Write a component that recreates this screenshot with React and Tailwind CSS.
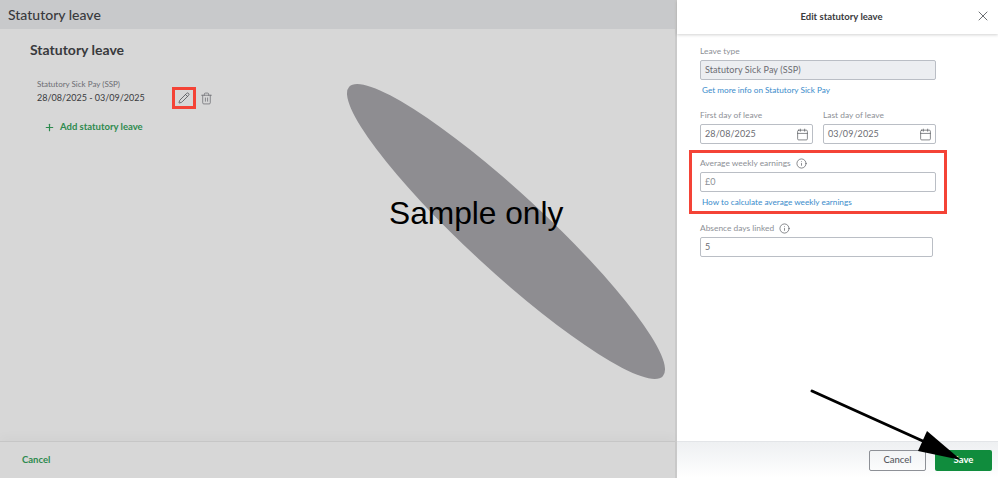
import React from 'react';
import { Calendar, Info, Pencil, Plus, Trash2, X } from 'lucide-react';

function Label({ children, info }) {
  return (
    <div className="flex items-center gap-[5px] h-[14px] text-[8.4px] leading-[14px] text-[#8d9096]">
      {children}
      {info && <Info size={11} strokeWidth={1.5} className="text-[#55585d]" />}
    </div>
  );
}

function Field({ value, className = '', icon }) {
  return (
    <div className={`flex items-center justify-between h-[20px] mt-[2px] pl-[4px] pr-[3px] border border-[#babec5] rounded-[2px] text-[9px] tracking-[0.1px] text-[#6b6c72] ${className}`}>
      <span>{value}</span>
      {icon && <Calendar size={13} strokeWidth={1.3} className="text-[#55585d]" />}
    </div>
  );
}

function HelpLink({ children }) {
  return <div className="h-[14px] mt-[3px] pl-[2px] text-[8.2px] leading-[14px] text-[#3a8ccb]">{children}</div>;
}

export default function App() {
  return (
    <div className="relative flex w-[998px] h-[478px] overflow-hidden bg-white font-['Lato','Open_Sans',sans-serif]">
      {/* Page behind the drawer */}
      <div className="flex flex-col w-[677px] shrink-0 bg-[#d7d7d7] border-r-2 border-[#cacaca]">
        <div className="flex items-center h-[29px] pl-2 bg-[#c8c9cb] text-[14px] font-medium text-[#393a3d]">
          Statutory leave
        </div>
        <div className="flex-1 pl-[30px] pt-[12px]">
          <h2 className="text-[14px] leading-[18px] font-bold text-[#393a3d]">Statutory leave</h2>
          <div className="flex mt-[18px] pl-[7px]">
            <div className="w-[135px]">
              <div className="mt-[1px] text-[8px] leading-[12px] text-[#6b6c72]">Statutory Sick Pay (SSP)</div>
              <div className="mt-[1px] text-[9px] leading-[14px] text-[#393a3d]">28/08/2025 - 03/09/2025</div>
            </div>
            <div className="flex items-center gap-[4px] mt-[10px] h-[22px]">
              <div className="flex items-center justify-center w-[24px] h-[22px] border-[3px] border-[#f44336]">
                <Pencil size={12} strokeWidth={1.7} className="text-[#55585d]" />
              </div>
              <Trash2 size={13} strokeWidth={1.4} className="text-[#6b6c72]" />
            </div>
          </div>
          <div className="flex items-center gap-[5px] mt-[11px] pl-[14px] text-[9.5px] leading-[14px] font-bold text-[#2d8a4e]">
            <Plus size={11} strokeWidth={2.6} />
            Add statutory leave
          </div>
        </div>
        <div className="flex items-center h-[37px] pl-[22px] border-t border-[#c6c6c6] shadow-[0_-6px_8px_rgba(0,0,0,0.02)] text-[9.5px] font-bold text-[#2d8a4e]">
          Cancel
        </div>
      </div>

      {/* Edit drawer */}
      <div className="flex flex-col flex-1 bg-white">
        <div className="relative flex items-center justify-center h-[34px] pl-[8px] shadow-[0_1px_3px_rgba(0,0,0,0.18)] text-[9.5px] font-bold text-[#393a3d]">
          Edit statutory leave
          <X size={16} strokeWidth={1.3} className="absolute right-[7px] top-[8px] text-[#55585d]" />
        </div>
        <div className="flex-1 pl-[23px] pr-[62px] pt-[10px]">
          <Label>Leave type</Label>
          <Field value="Statutory Sick Pay (SSP)" className="bg-[#eceef1]" />
          <HelpLink>Get more info on Statutory Sick Pay</HelpLink>
          <div className="flex gap-[10px] mt-[11px]">
            <div className="flex-1">
              <Label>First day of leave</Label>
              <Field value="28/08/2025" icon />
            </div>
            <div className="flex-1">
              <Label>Last day of leave</Label>
              <Field value="03/09/2025" icon />
            </div>
          </div>
          <div className="-mx-[11px] mt-[6px] h-[64px] px-[8px] pt-[3px] border-[3px] border-[#f44336]">
            <Label info>Average weekly earnings</Label>
            <Field value="£0" className="text-[#8d9096]" />
            <HelpLink>How to calculate average weekly earnings</HelpLink>
          </div>
          <div className="mt-[7px] w-[233px]">
            <Label info>Absence days linked</Label>
            <Field value="5" />
          </div>
        </div>
        <div className="flex items-center justify-end gap-[9px] h-[37px] pr-[6px] bg-gradient-to-b from-[#eef0f2] to-white border-t border-[#e3e5e8]">
          <div className="flex items-center justify-center w-[57px] h-[21px] border border-[#8d9096] rounded-[2px] text-[9.5px] font-medium text-[#55585d]">Cancel</div>
          <div className="flex items-center justify-center w-[57px] h-[21px] bg-[#108c3d] rounded-[2px] text-[9.5px] font-bold text-white">Save</div>
        </div>
      </div>

      {/* Watermark and annotation arrow lying over the page */}
      <svg className="absolute inset-0 pointer-events-none" width="998" height="478" viewBox="0 0 998 478">
        <ellipse cx="506" cy="231.5" rx="213.4" ry="38.7" transform="rotate(42.7 506 231.5)" fill="#8e8d91" />
        <line x1="812" y1="391" x2="925" y2="442" stroke="#000" strokeWidth="3" strokeLinecap="round" />
        <polygon points="927,431 918,451 961,460" fill="#000" />
      </svg>
      <div className="absolute left-[389px] top-[194px] font-['Liberation_Sans',sans-serif] text-[31.7px] leading-[38px] text-black">
        Sample only
      </div>
    </div>
  );
}
